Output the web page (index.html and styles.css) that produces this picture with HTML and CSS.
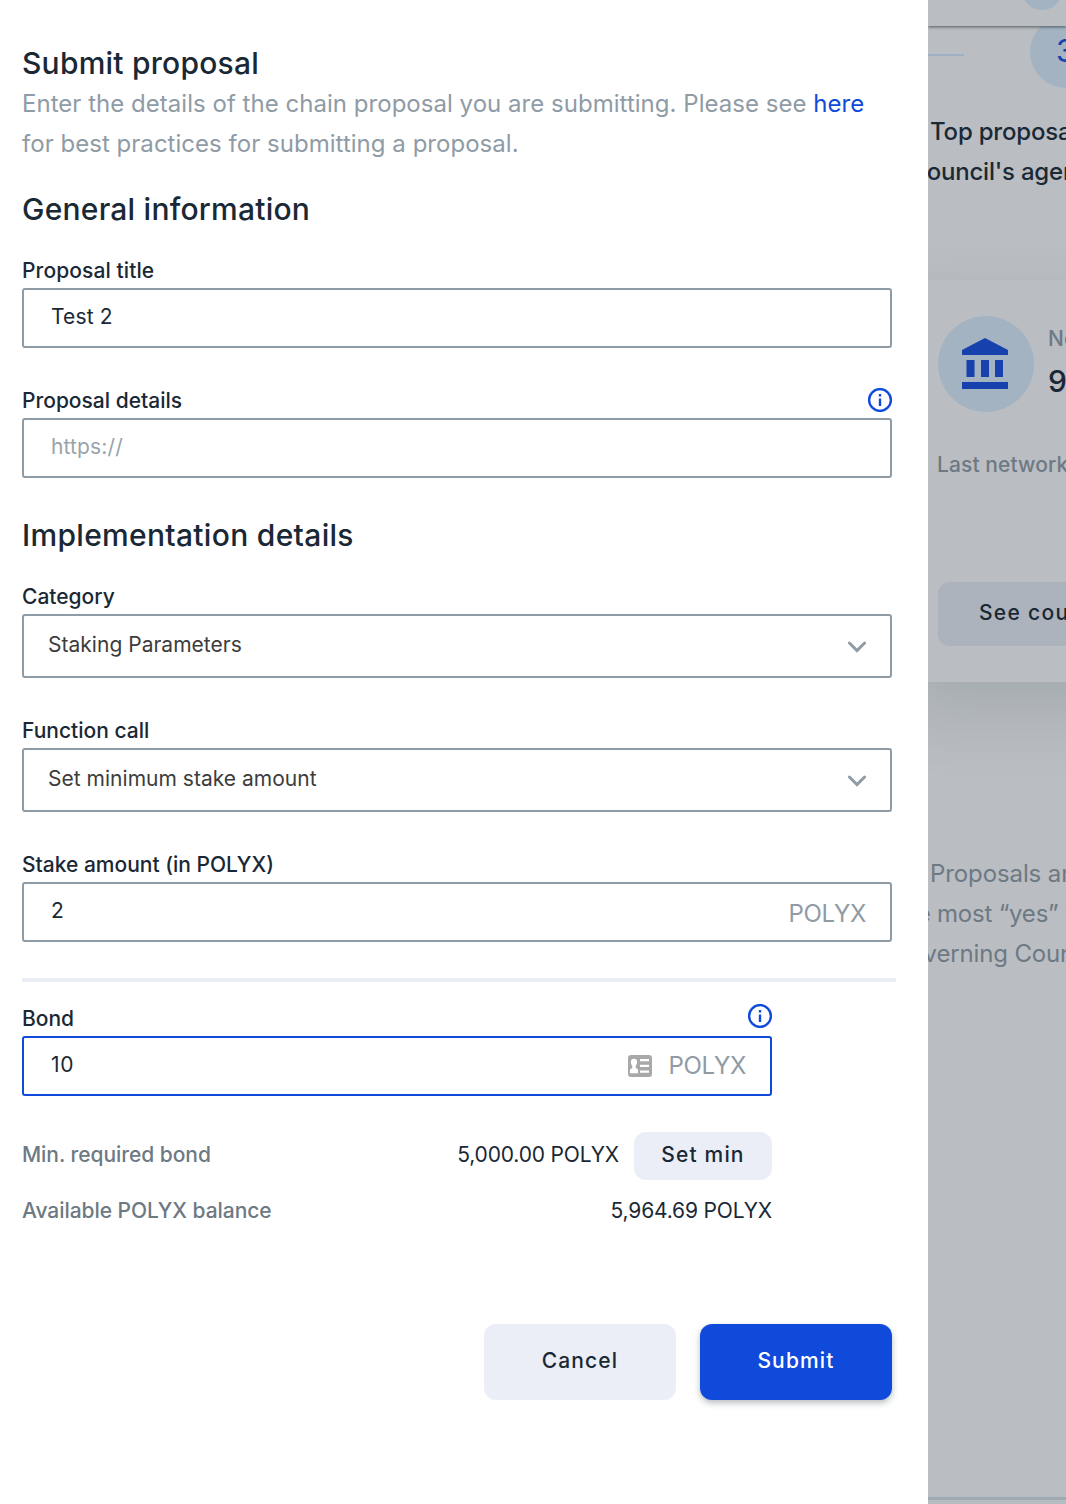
FILE: index.html
```
<!DOCTYPE html>
<html lang="en">
<head>
<meta charset="utf-8">
<title>Submit proposal</title>
<link rel="stylesheet" href="styles.css">
</head>
<body>
<main class="drawer">
  <h1 class="heading">Submit proposal</h1>
  <p class="intro"><span class="intro-first">Enter the details of the chain proposal you are submitting. Please see <a class="link" href="#">here</a></span><br><span class="intro-second">for best practices for submitting a proposal.</span></p>

  <h2 class="heading general">General information</h2>
  <div class="field">
    <div class="label-row"><span class="label title-label">Proposal title</span></div>
    <div class="box"><span class="value">Test 2</span></div>
  </div>
  <div class="field">
    <div class="label-row"><span class="label">Proposal details</span>
      <svg class="info" viewBox="0 0 24 24"><circle cx="12" cy="12" r="10.9"/><path d="M12 6v2.4M12 10.4v7.6"/></svg>
    </div>
    <div class="box"><span class="value placeholder">https://</span></div>
  </div>

  <h2 class="heading implementation">Implementation details</h2>
  <div class="field">
    <div class="label-row"><span class="label">Category</span></div>
    <div class="box select"><span class="value">Staking Parameters</span>
      <svg class="chevron" viewBox="0 0 20 14"><path d="M2.4 3 10 10.6 17.6 3"/></svg>
    </div>
  </div>
  <div class="field">
    <div class="label-row"><span class="label">Function call</span></div>
    <div class="box select"><span class="value">Set minimum stake amount</span>
      <svg class="chevron" viewBox="0 0 20 14"><path d="M2.4 3 10 10.6 17.6 3"/></svg>
    </div>
  </div>
  <div class="field stake">
    <div class="label-row"><span class="label">Stake amount (in POLYX)</span></div>
    <div class="box"><span class="value">2</span><span class="unit">POLYX</span></div>
  </div>

  <hr class="divider">

  <section class="bond">
    <div class="label-row"><span class="label">Bond</span>
      <svg class="info" viewBox="0 0 24 24"><circle cx="12" cy="12" r="10.9"/><path d="M12 6v2.4M12 10.4v7.6"/></svg>
    </div>
    <div class="box focused"><span class="value">10</span>
      <svg class="card-icon" viewBox="0 0 24 22"><rect width="24" height="22" rx="3" fill="#a9a9a9"/><path fill="#fff" d="M12 4h9v2.2h-9zM12 9.800h9v2.200h-9zM12 15.600h9v2.200h-9zM6 3.800c4.200 0 3.500 5 1.700 7v2L10 14.500v3.700H2v-3.700L4.300 13v-2C2.500 9 1.800 3.800 6 3.800z"/></svg>
      <span class="unit">POLYX</span>
    </div>
    <div class="row minimum"><span class="muted">Min. required bond</span><span class="amount">5,000.00 POLYX</span><button class="button small">Set min</button></div>
    <div class="row"><span class="muted">Available POLYX balance</span><span class="amount">5,964.69 POLYX</span></div>
  </section>

  <div class="actions">
    <button class="button">Cancel</button>
    <button class="button primary">Submit</button>
  </div>
</main>

<aside class="backdrop">
  <header class="topbar"><div class="avatar"></div></header>
  <div class="steps"><div class="line"></div><div class="step">3</div></div>
  <p class="summary">Top proposals<br><span class="summary-next">council's agenda</span></p>
  <section class="council">
    <div class="network">
      <div class="disc"><svg class="bank" viewBox="0 0 46 51"><path d="M0 12 23 0 46 12v5H0zM4.500 22h8v17h-8zM19 22h8v17h-8zM33 22h8v17h-8zM0 44h46v7H0z"/></svg></div>
      <div class="stats"><div class="stat-label">Next</div><div class="stat-value">9</div></div>
    </div>
    <div class="last">Last network</div>
    <div class="button council-button">See council</div>
  </section>
  <p class="note"><span class="note-first">Proposals and</span><br><span class="note-second">the most “yes” votes</span><br><span class="note-third">Governing Council</span></p>
  <footer class="footer"></footer>
</aside>
</body>
</html>
```
FILE: styles.css
```
* { box-sizing: border-box; }
body {
  margin: 0;
  width: 1066px;
  height: 1504px;
  display: flex;
  overflow: hidden;
  background: #fff;
  color: #1a2835;
  font-family: Inter, "Liberation Sans", sans-serif;
  white-space: nowrap;
}
p, h1, h2 { margin: 0; }

.drawer { width: 928px; flex: none; padding: 43px 32px 0 22px; }
.heading { font-size: 30px; font-weight: 500; line-height: 40px; letter-spacing: .23px; }
.intro { margin-top: 1px; font-size: 24px; line-height: 40px; color: #8f9ba5; letter-spacing: .03px; }
.link { color: #104adb; text-decoration: none; }
.general { margin: 25px 0 25px; }
.implementation { margin: 37px 0 25px; letter-spacing: .31px; }

.field { width: 870px; margin-bottom: 36px; }
.label-row { height: 34px; display: flex; justify-content: space-between; align-items: center; }
.label { font-size: 21px; font-weight: 500; line-height: 34px; letter-spacing: 0; }
.title-label { letter-spacing: .1px; }
.info { width: 24px; height: 24px; margin-bottom: 2px; fill: none; stroke: #104adb; stroke-width: 2.4; }
.box {
  height: 60px;
  display: flex;
  align-items: center;
  border: 2px solid #8f9ba5;
  border-radius: 3px;
  padding: 0 24px 0 27px;
}
.value { flex: 1; font-size: 21px; line-height: 28px; letter-spacing: .15px; margin-top: -2px; }
.placeholder { color: #98a3ac; }
.select { height: 64px; padding: 0 23px 0 24px; color: #3c3c3c; }
.select .value { letter-spacing: .02px; }
.chevron { width: 20px; height: 14px; margin-top: 1px; fill: none; stroke: #8f9ba5; stroke-width: 3; stroke-linecap: round; }
.unit { font-size: 24px; line-height: 30px; color: #8f9ba5; margin-top: 4px; letter-spacing: -.3px; }
.divider { width: 874px; height: 4px; margin: 0 0 20px; border: 0; background: #ebeef5; }

.bond { width: 750px; }
.bond .info { margin-bottom: 6px; }
.focused { border-color: #104adb; }
.focused .value { letter-spacing: .6px; }
.focused .unit { margin-top: 0; }
.card-icon { width: 24px; height: 22px; margin-right: 16px; }
.row { height: 48px; display: flex; align-items: center; margin-top: 8px; font-size: 21px; }
.minimum { margin-top: 36px; }
.muted { flex: 1; color: #6d7983; font-weight: 500; letter-spacing: -.05px; margin-top: -3px; }
.amount { margin-top: -3px; letter-spacing: -.16px; }
.button {
  width: 192px;
  height: 76px;
  border: 0;
  border-radius: 12px;
  background: #ebeef7;
  color: #1a2835;
  font: 500 21px/28px Inter, "Liberation Sans", sans-serif;
  letter-spacing: 1.15px;
  padding: 0 0 2px;
}
.small { width: 138px; height: 48px; margin-left: 15px; }
.actions { width: 870px; display: flex; justify-content: flex-end; gap: 24px; margin-top: 88px; }
.primary { background: #104adb; color: #fff; box-shadow: 0 3px 6px rgba(20, 35, 50, .3); }

.backdrop { flex: 1; min-width: 0; height: 1504px; overflow: hidden; display: flex; flex-direction: column; background: #babdc2; }
.topbar { height: 26px; flex: none; padding-left: 94px; overflow: hidden; box-shadow: 0 1px 3px rgba(45, 55, 65, .75); position: relative; z-index: 1; background: #babdc2; }
.avatar { width: 40px; height: 40px; margin-top: -30px; border-radius: 50%; background: #a3b3c2; }
.steps { height: 62px; flex: none; display: flex; }
.line { width: 36px; height: 2px; flex: none; margin: 28px 66px 0 0; background: #9eb1c4; }
.step { width: 72px; height: 72px; flex: none; margin-top: -10px; border-radius: 50%; background: #a3b3c2; color: #1742ad; font-size: 31px; line-height: 70px; padding-left: 26px; }
.summary { margin-top: 24px; padding-left: 2px; font-size: 24px; line-height: 40px; font-weight: 500; color: #1a2935; letter-spacing: -.2px; }
.summary-next { margin-left: -17px; }
.council { width: 420px; height: 402px; flex: none; margin: 88px 0 0 -26px; padding: 36px 0 0 36px; box-shadow: 0 30px 60px rgba(80, 105, 105, .2); background: #babdc2; }
.network { display: flex; }
.disc { width: 96px; height: 96px; display: flex; justify-content: center; align-items: center; border-radius: 50%; background: #a3b3c2; }
.bank { width: 46px; height: 51px; fill: #1742ad; margin: 0 2px 2px 0; }
.stats { margin-left: 14px; }
.stat-label { margin-top: 7px; font-size: 21px; line-height: 32px; font-weight: 500; color: #6d7983; }
.stat-value { font-size: 30px; line-height: 40px; margin-top: 6px; font-weight: 500; }
.last { margin: 36px 0 0 -1px; font-size: 21px; line-height: 34px; font-weight: 500; color: #6d7983; letter-spacing: .1px; }
.council-button { height: 64px; margin-top: 100px; padding: 17px 0 0 41px; letter-spacing: 1.3px; background: #acb3bc; }
.note { margin-top: 172px; font-size: 24px; line-height: 40px; color: #6d7983; letter-spacing: -.1px; }
.note-first { margin-left: 2px; }
.note-second { margin-left: -33px; letter-spacing: -.2px; }
.note-third { margin-left: -36px; letter-spacing: -.15px; }
.footer { margin-top: auto; height: 7px; border-top: 3px solid #a0aab4; background: #b7bbc2; }
```
